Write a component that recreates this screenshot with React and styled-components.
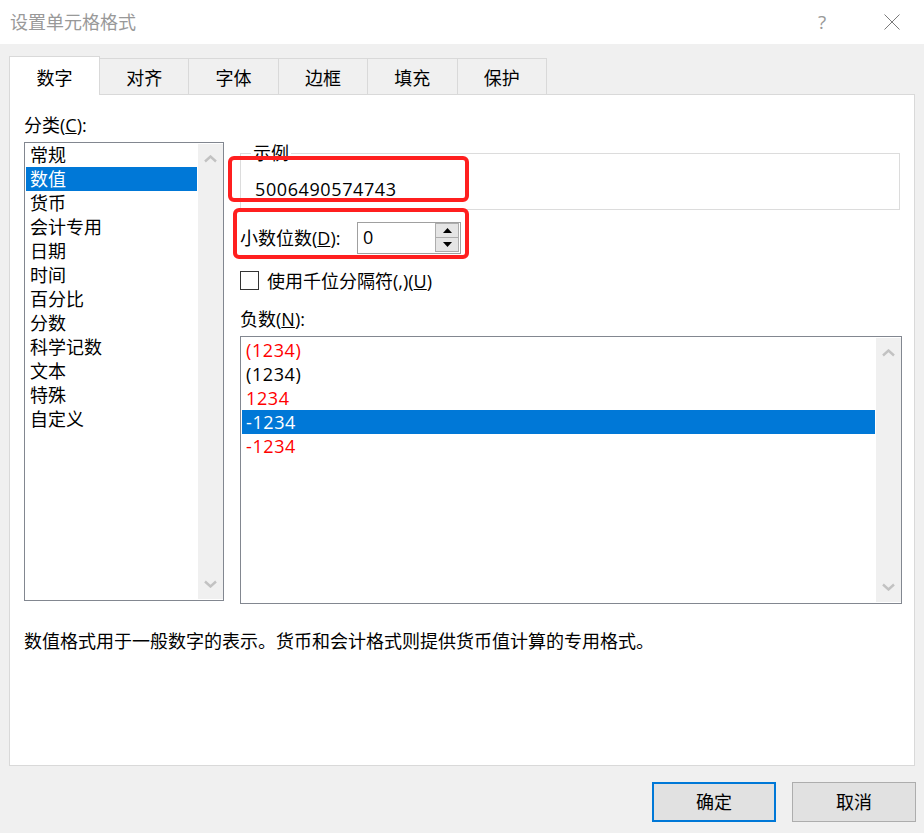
import React from "react";
import styled, { createGlobalStyle } from "styled-components";

const GlobalStyle = createGlobalStyle`
  html, body { margin: 0; padding: 0; }
  body {
    background: #f0f0f0;
    font-family: "Open Sans", "Noto Sans CJK SC", sans-serif;
    font-size: 18px;
    color: #000;
  }
  * { box-sizing: border-box; }
`;

const Window = styled.div`
  width: 924px;
  height: 833px;
  display: flex;
  flex-direction: column;
  overflow: hidden;
  background: #f0f0f0;
`;

const TitleBar = styled.div`
  height: 44px;
  flex: none;
  background: #fff;
  display: flex;
  align-items: center;
  padding: 0 9px 0 10px;
`;

const Title = styled.div`
  flex: 1;
  color: #999;
  line-height: 24px;
  margin-top: -1px;
`;

const TitleButton = styled.div`
  width: 46px;
  height: 30px;
  display: flex;
  align-items: center;
  justify-content: center;
  color: #999;
  font-size: 19px;
  margin-left: ${(p) => p.$gap || 0}px;
`;

const Body = styled.div`
  flex: 1;
  padding: 12px 9px 0;
  display: flex;
  flex-direction: column;
`;

const TabStrip = styled.div`
  display: flex;
  align-items: flex-end;
  height: 38px;
`;

const Tab = styled.div`
  text-align: center;
  line-height: 24px;
  position: relative;
  ${(p) =>
    p.$active
      ? `
    width: 91px;
    height: 39px;
    margin-bottom: -1px;
    background: #fff;
    border: 1px solid #d9d9d9;
    border-bottom: none;
    padding-top: 9px;
    z-index: 1;
  `
      : `
    width: 89.4px;
    height: 36px;
    background: #f0f0f0;
    border-top: 1px solid #d9d9d9;
    border-right: 1px solid #d9d9d9;
    padding-top: 7px;
  `}
`;

const Panel = styled.div`
  height: 672px;
  background: #fff;
  border: 1px solid #d9d9d9;
  padding: 18px 12px 0 14px;
`;

const TopSection = styled.div`
  display: flex;
  gap: 16px;
`;

const LeftCol = styled.div`
  width: 200px;
  display: flex;
  flex-direction: column;
`;

const FieldLabel = styled.div`
  line-height: 24px;
  height: 24px;
  margin-top: ${(p) => p.$mt || 0}px;
`;

const ListBox = styled.div`
  margin-top: 5px;
  height: ${(p) => p.$h}px;
  border: 1px solid #828790;
  background: #fff;
  display: flex;
`;

const ListItems = styled.div`
  flex: 1;
  padding: ${(p) => p.$pt || 0}px 1px 0 1px;
`;

const ListItem = styled.div`
  height: 24px;
  line-height: 24px;
  padding-left: 4px;
  white-space: nowrap;
  letter-spacing: ${(p) => (p.$num ? "0.6px" : "0")};
  background: ${(p) => (p.$selected ? "#0078d7" : "transparent")};
  color: ${(p) => (p.$selected ? "#fff" : p.$red ? "#ff0000" : "#000")};
`;

const ScrollTrack = styled.div`
  width: 25px;
  margin: 1px 0;
  background: #f0f0f0;
  display: flex;
  flex-direction: column;
  justify-content: space-between;
  align-items: center;
  padding: 11px 0 11px;
`;

const RightCol = styled.div`
  flex: 1;
  position: relative;
  padding-top: 40px;
`;

const GroupBox = styled.div`
  position: relative;
  height: 57px;
  margin-right: 2px;
  border: 1px solid #dcdcdc;
  padding: 23px 14px 0;
`;

const Legend = styled.div`
  position: absolute;
  top: -13px;
  left: 10px;
  padding: 0 2px;
  background: #fff;
  line-height: 24px;
`;

const SampleValue = styled.div`
  line-height: 24px;
  letter-spacing: 0.6px;
`;

const DecimalRow = styled.div`
  margin-top: 12px;
  height: 32px;
  display: flex;
  align-items: center;
`;

const DecimalLabel = styled.div`
  width: 117px;
  line-height: 24px;
`;

const SpinBox = styled.div`
  width: 104px;
  height: 32px;
  border: 1px solid #a0a0a0;
  background: #fff;
  display: flex;
  align-items: center;
  padding-left: 5px;
`;

const SpinValue = styled.div`
  flex: 1;
  line-height: 24px;
  margin-top: -3px;
`;

const SpinButtons = styled.div`
  width: 24px;
  height: 30px;
  display: flex;
  flex-direction: column;
  margin-right: 1px;
`;

const SpinButton = styled.div`
  height: 15px;
  background: #e5e5e5;
  border: 1px solid #adadad;
  margin-top: ${(p) => (p.$down ? -1 : 0)}px;
  display: flex;
  align-items: center;
  justify-content: center;
`;

const CheckRow = styled.div`
  margin-top: 17px;
  height: 19px;
  display: flex;
  align-items: center;
  gap: 8px;
`;

const CheckBox = styled.div`
  width: 19px;
  height: 19px;
  border: 1px solid #333;
  background: #fff;
`;

const CheckLabel = styled.div`
  line-height: 24px;
`;

const Description = styled.div`
  margin-top: 25px;
  line-height: 24px;
`;

const Highlight = styled.div`
  position: absolute;
  top: ${(p) => p.$top}px;
  left: ${(p) => p.$left}px;
  width: ${(p) => p.$w}px;
  height: ${(p) => p.$h}px;
  border: 4px solid #ff1f1f;
  border-radius: 6px;
  pointer-events: none;
`;

const Footer = styled.div`
  display: flex;
  justify-content: flex-end;
  gap: 16px;
  padding: 16px 0 0;
  margin-right: -1px;
`;

const DialogButton = styled.button`
  width: 124px;
  height: 40px;
  background: #e1e1e1;
  border: ${(p) => (p.$primary ? "2px solid #0078d7" : "1px solid #adadad")};
  font: inherit;
  font-size: 18px;
  color: #000;
  padding: 0;
  line-height: 24px;
`;

const Chevron = ({ down }) => (
  <svg width="13" height="8" viewBox="0 0 13 8">
    <polyline
      points={down ? "1,1.5 6.5,6.5 12,1.5" : "1,6.5 6.5,1.5 12,6.5"}
      fill="none"
      stroke="#c2c2c2"
      strokeWidth="2.4"
    />
  </svg>
);

const Triangle = ({ down }) => (
  <svg width="9" height="5" viewBox="0 0 9 5">
    <polygon points={down ? "0,0 9,0 4.5,5" : "0,5 9,5 4.5,0"} fill="#000" />
  </svg>
);

const CloseIcon = () => (
  <svg width="16" height="16" viewBox="0 0 16 16">
    <path d="M0.5 0.5 L15.5 15.5 M15.5 0.5 L0.5 15.5" stroke="#7a7a7a" strokeWidth="1" fill="none" />
  </svg>
);

const tabs = ["数字", "对齐", "字体", "边框", "填充", "保护"];
const categories = ["常规", "数值", "货币", "会计专用", "日期", "时间", "百分比", "分数", "科学记数", "文本", "特殊", "自定义"];
const negatives = [
  { text: "(1234)", red: true },
  { text: "(1234)", red: false },
  { text: "1234", red: true },
  { text: "-1234", red: false, selected: true },
  { text: "-1234", red: true },
];

export default function App() {
  return (
    <>
      <GlobalStyle />
      <Window>
        <TitleBar>
          <Title>设置单元格格式</Title>
          <TitleButton>?</TitleButton>
          <TitleButton $gap={24}>
            <CloseIcon />
          </TitleButton>
        </TitleBar>
        <Body>
          <TabStrip>
            {tabs.map((t, i) => (
              <Tab key={t} $active={i === 0}>
                {t}
              </Tab>
            ))}
          </TabStrip>
          <Panel>
            <TopSection>
              <LeftCol>
                <FieldLabel>
                  分类(<u>C</u>):
                </FieldLabel>
                <ListBox $h={459}>
                  <ListItems>
                    {categories.map((c, i) => (
                      <ListItem key={c} $selected={i === 1}>
                        {c}
                      </ListItem>
                    ))}
                  </ListItems>
                  <ScrollTrack>
                    <Chevron />
                    <Chevron down />
                  </ScrollTrack>
                </ListBox>
              </LeftCol>
              <RightCol>
                <GroupBox>
                  <Legend>示例</Legend>
                  <SampleValue>5006490574743</SampleValue>
                </GroupBox>
                <DecimalRow>
                  <DecimalLabel>
                    小数位数(<u>D</u>):
                  </DecimalLabel>
                  <SpinBox>
                    <SpinValue>0</SpinValue>
                    <SpinButtons>
                      <SpinButton>
                        <Triangle />
                      </SpinButton>
                      <SpinButton $down>
                        <Triangle down />
                      </SpinButton>
                    </SpinButtons>
                  </SpinBox>
                </DecimalRow>
                <CheckRow>
                  <CheckBox />
                  <CheckLabel>
                    使用千位分隔符(,)(<u>U</u>)
                  </CheckLabel>
                </CheckRow>
                <FieldLabel $mt={17}>
                  负数(<u>N</u>):
                </FieldLabel>
                <ListBox $h={268}>
                  <ListItems $pt={1}>
                    {negatives.map((n, i) => (
                      <ListItem key={i} $num $red={n.red} $selected={n.selected}>
                        {n.text}
                      </ListItem>
                    ))}
                  </ListItems>
                  <ScrollTrack>
                    <Chevron />
                    <Chevron down />
                  </ScrollTrack>
                </ListBox>
                <Highlight $top={43} $left={-12} $w={241} $h={46} />
                <Highlight $top={95} $left={-7} $w={236} $h={51} />
              </RightCol>
            </TopSection>
            <Description>数值格式用于一般数字的表示。货币和会计格式则提供货币值计算的专用格式。</Description>
          </Panel>
          <Footer>
            <DialogButton $primary>确定</DialogButton>
            <DialogButton>取消</DialogButton>
          </Footer>
        </Body>
      </Window>
    </>
  );
}
